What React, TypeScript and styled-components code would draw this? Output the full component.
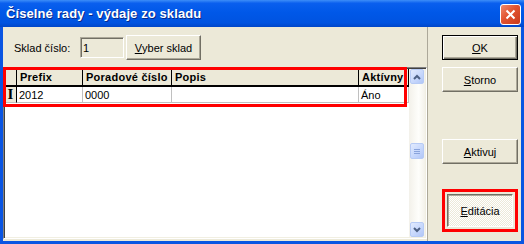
import styled, { createGlobalStyle } from "styled-components";

const GlobalStyle = createGlobalStyle`
  html, body {
    margin: 0;
    padding: 0;
    background: #ffffff;
  }
  body {
    font-family: "Liberation Sans", Arial, sans-serif;
    font-size: 11px;
    color: #000;
  }
`;

const Window = styled.div`
  width: 524px;
  height: 244px;
  display: flex;
  flex-direction: column;
  background: #0a55e2;
  overflow: hidden;
`;

const TitleBar = styled.div`
  height: 27px;
  flex: none;
  display: flex;
  align-items: center;
  justify-content: space-between;
  padding: 0 3px 0 6px;
  background: linear-gradient(
    to bottom,
    #3d8ef8 0%,
    #0a5fee 12%,
    #0058e8 45%,
    #0053e0 85%,
    #0046c8 100%
  );
`;

const Title = styled.span`
  color: #fff;
  font-weight: bold;
  font-size: 13px;
  text-shadow: 1px 1px 0 #0a2a8a;
  letter-spacing: 0.1px;
`;

const CloseButton = styled.div`
  width: 19px;
  height: 19px;
  margin-top: 1px;
  border: 1px solid #fff;
  border-radius: 3px;
  background: linear-gradient(135deg, #f08a6c 0%, #e2532f 45%, #c8391b 100%);
  display: flex;
  align-items: center;
  justify-content: center;
`;

const Body = styled.div`
  flex: 1;
  display: flex;
  margin: 0 3px 3px;
  background: #ece9d8;
  min-height: 0;
`;

const LeftPanel = styled.div`
  width: 424px;
  flex: none;
  display: flex;
  flex-direction: column;
`;

const Separator = styled.div`
  width: 1px;
  flex: none;
  background: #aca899;
`;

const RightPanel = styled.div`
  flex: 1;
  display: flex;
  flex-direction: column;
  align-items: flex-start;
  padding: 8px 0 0 14px;
`;

const TopRow = styled.div`
  display: flex;
  align-items: center;
  height: 25px;
  padding: 8px 0 0 11px;
  margin-bottom: 7px;
`;

const Label = styled.span`
  width: 66px;
`;

const Field = styled.div`
  width: 40px;
  height: 19px;
  margin-right: 2px;
  padding-left: 2px;
  display: flex;
  align-items: center;
  background: #ece9d8;
  border: 1px solid;
  border-color: #aca899 #fff #fff #aca899;
  box-shadow: inset 1px 1px 0 #716f64;
`;

const Button = styled.div<{ $default?: boolean; $width?: number }>`
  box-sizing: border-box;
  width: ${(p) => p.$width ?? 76}px;
  height: 25px;
  display: flex;
  align-items: center;
  justify-content: center;
  background: #ece9d8;
  border: 1px solid;
  border-color: ${(p) =>
    p.$default ? "#000" : "#fff #716f64 #716f64 #fff"};
  box-shadow: ${(p) =>
    p.$default
      ? "inset 1px 1px 0 #fff, inset -1px -1px 0 #716f64, inset -2px -2px 0 #aca899"
      : "inset -1px -1px 0 #aca899"};
  u {
    text-decoration: underline;
  }
`;

const Spacer = styled.div<{ $h: number }>`
  height: ${(p) => p.$h}px;
  flex: none;
`;

const RedFrame = styled.div`
  border: 3px solid #ff0000;
  padding: 2px;
`;

const PressedButton = styled.div`
  box-sizing: border-box;
  width: 66px;
  height: 33px;
  display: flex;
  align-items: center;
  justify-content: center;
  border: 1px solid;
  border-color: #716f64 #fff #fff #716f64;
  box-shadow: inset 1px 1px 0 #aca899;
  background-color: #f5f4ee;
  background-image: repeating-conic-gradient(#ffffff 0 25%, #ece9d8 0 50%);
  background-size: 2px 2px;
  u {
    text-decoration: underline;
  }
`;

const Grid = styled.div`
  position: relative;
  flex: 1;
  margin-bottom: 2px;
  display: flex;
  background: #fff;
  border: 1px solid;
  border-color: #808080 #fff #fff #808080;
  box-shadow: inset 1px 1px 0 #404040, inset -1px -1px 0 #f1efe2;
`;

const Table = styled.div`
  flex: 1;
  margin: 1px 0 0 1px;
  display: grid;
  grid-template-columns: 12px 66px 89px 187px 1fr;
  grid-auto-rows: min-content;
`;

const HeadCell = styled.div`
  height: 16px;
  display: flex;
  align-items: center;
  padding-left: 3px;
  background: #ece9d8;
  border-right: 1px solid #000;
  border-bottom: 2px solid #000;
  font-weight: bold;
  letter-spacing: 0.25px;
  white-space: nowrap;
  overflow: hidden;
`;

const Cell = styled.div<{ $indicator?: boolean }>`
  height: 15px;
  display: flex;
  align-items: center;
  padding-left: ${(p) => (p.$indicator ? 0 : 2)}px;
  justify-content: ${(p) => (p.$indicator ? "center" : "flex-start")};
  background: ${(p) => (p.$indicator ? "#ece9d8" : "#fff")};
  border-right: 1px solid ${(p) => (p.$indicator ? "#000" : "#c0c0c0")};
  border-bottom: 1px solid #c0c0c0;
  white-space: nowrap;
`;

const Cursor = styled.span`
  font-family: "Liberation Serif", "Times New Roman", serif;
  font-weight: bold;
  font-size: 15px;
  line-height: 15px;
`;

const ScrollBar = styled.div`
  width: 16px;
  flex: none;
  margin: 1px 1px 1px 0;
  display: flex;
  flex-direction: column;
  align-items: center;
  background: linear-gradient(to right, #f3f1ea, #fefefb 60%, #f3f1ea);
`;

const ScrollButton = styled.div`
  width: 14px;
  height: 15px;
  flex: none;
  box-sizing: border-box;
  border: 1px solid #b7cbf5;
  border-radius: 2px;
  background: linear-gradient(135deg, #e2ebfe 0%, #c5d6fc 60%, #b1c6f7 100%);
  display: flex;
  align-items: center;
  justify-content: center;
`;

const Track = styled.div`
  flex: 1;
  display: flex;
  flex-direction: column;
`;

const Thumb = styled(ScrollButton)`
  height: 16px;
  margin-top: 59px;
`;

const Highlight = styled.div`
  position: absolute;
  left: -1px;
  top: -1px;
  width: 404px;
  height: 40px;
  box-sizing: border-box;
  border: 3px solid #ff0000;
  pointer-events: none;
`;

const columns = ["Prefix", "Poradové číslo", "Popis", "Aktívny"];
const row = ["2012", "0000", "", "Áno"];

function Arrow({ up }: { up?: boolean }) {
  return (
    <svg width="8" height="6" viewBox="0 0 8 6">
      <path
        d={up ? "M1 5 L4 2 L7 5" : "M1 1 L4 4 L7 1"}
        fill="none"
        stroke="#4d6185"
        strokeWidth="2"
      />
    </svg>
  );
}

export default function App() {
  return (
    <>
      <GlobalStyle />
      <Window>
        <TitleBar>
          <Title>Číselné rady - výdaje zo skladu</Title>
          <CloseButton>
            <svg width="11" height="11" viewBox="0 0 11 11">
              <path d="M1.5 1.5 L9.5 9.5 M9.5 1.5 L1.5 9.5" stroke="#fff" strokeWidth="2" />
            </svg>
          </CloseButton>
        </TitleBar>
        <Body>
          <LeftPanel>
            <TopRow>
              <Label>Sklad číslo:</Label>
              <Field>1</Field>
              <Button $width={75}>
                <u>V</u>yber sklad
              </Button>
            </TopRow>
            <Grid>
              <Table>
                <HeadCell />
                {columns.map((c) => (
                  <HeadCell key={c}>{c}</HeadCell>
                ))}
                <Cell $indicator>
                  <Cursor>I</Cursor>
                </Cell>
                {row.map((v, i) => (
                  <Cell key={i}>{v}</Cell>
                ))}
              </Table>
              <ScrollBar>
                <ScrollButton>
                  <Arrow up />
                </ScrollButton>
                <Track>
                  <Thumb>
                    <svg width="6" height="7" viewBox="0 0 6 7">
                      <path d="M0 1.5 H6 M0 3.5 H6 M0 5.5 H6" stroke="#8aa4dc" strokeWidth="1" />
                    </svg>
                  </Thumb>
                </Track>
                <ScrollButton>
                  <Arrow />
                </ScrollButton>
              </ScrollBar>
              <Highlight />
            </Grid>
          </LeftPanel>
          <Separator />
          <RightPanel>
            <Button $default>
              <u>O</u>K
            </Button>
            <Spacer $h={7} />
            <Button>
              <u>S</u>torno
            </Button>
            <Spacer $h={47} />
            <Button>
              <u>A</u>ktivuj
            </Button>
            <Spacer $h={25} />
            <RedFrame>
              <PressedButton>
                <u>E</u>ditácia
              </PressedButton>
            </RedFrame>
          </RightPanel>
        </Body>
      </Window>
    </>
  );
}
